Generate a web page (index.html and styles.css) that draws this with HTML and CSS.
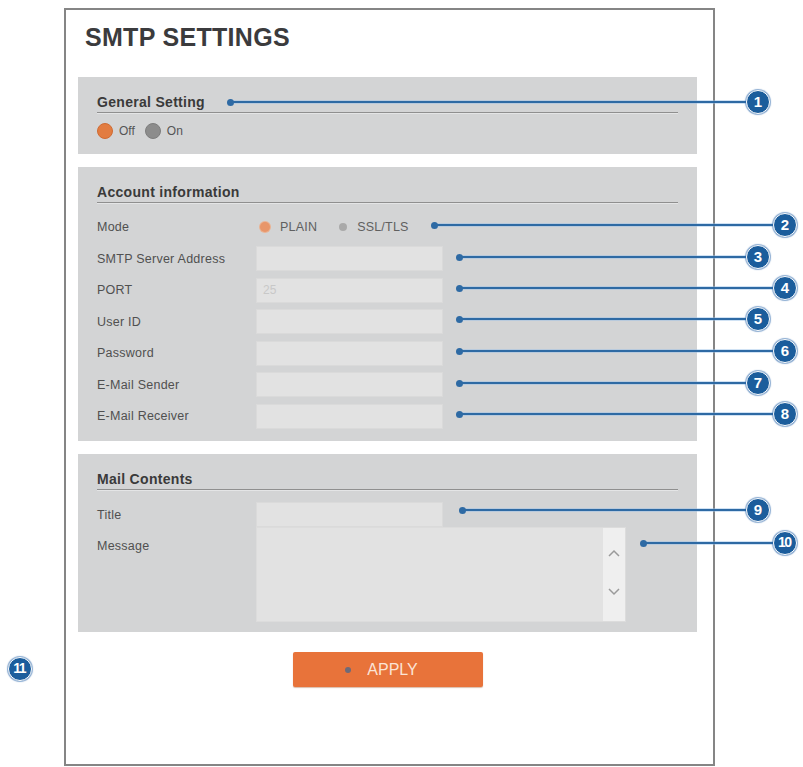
FILE: index.html
```html
<!DOCTYPE html>
<html lang="en">
<head>
<meta charset="utf-8">
<title>SMTP Settings</title>
<link rel="stylesheet" href="styles.css">
</head>
<body>
<div class="page">
  <section class="frame">
    <h1 class="title">SMTP SETTINGS</h1>

    <div class="panel">
      <h2 class="panel-head">General Setting</h2>
      <div class="toggle-row">
        <span class="toggle"><span class="knob knob-active"></span>Off</span>
        <span class="toggle"><span class="knob knob-idle"></span>On</span>
      </div>
    </div>

    <div class="panel panel-account">
      <h2 class="panel-head">Account information</h2>
      <div class="form-grid">
        <span class="label">Mode</span>
        <div class="mode">
          <span class="dot dot-active"></span><span class="mode-text">PLAIN</span>
          <span class="dot dot-idle"></span><span class="mode-text">SSL/TLS</span>
        </div>
        <span class="label">SMTP Server Address</span>
        <div class="field"></div>
        <span class="label">PORT</span>
        <div class="field"><span class="placeholder">25</span></div>
        <span class="label">User ID</span>
        <div class="field"></div>
        <span class="label">Password</span>
        <div class="field"></div>
        <span class="label">E-Mail Sender</span>
        <div class="field"></div>
        <span class="label">E-Mail Receiver</span>
        <div class="field"></div>
      </div>
    </div>

    <div class="panel panel-mail">
      <h2 class="panel-head">Mail Contents</h2>
      <div class="mail-grid">
        <span class="label">Title</span>
        <div class="field"></div>
        <span class="label label-top">Message</span>
        <div class="textarea">
          <div class="scrollbar">
            <svg width="12" height="8" viewBox="0 0 12 8"><polyline points="1,7 6,2 11,7" fill="none" stroke="#9a9a9a" stroke-width="1.5"/></svg>
            <svg width="12" height="8" viewBox="0 0 12 8"><polyline points="1,1 6,6 11,1" fill="none" stroke="#9a9a9a" stroke-width="1.5"/></svg>
          </div>
        </div>
      </div>
    </div>

    <div class="actions">
      <button class="apply" type="button"><span class="apply-dot"></span>APPLY</button>
    </div>
  </section>

  <div class="callout c1"><span class="badge">1</span></div>
  <div class="callout c2"><span class="badge">2</span></div>
  <div class="callout c3"><span class="badge">3</span></div>
  <div class="callout c4"><span class="badge">4</span></div>
  <div class="callout c5"><span class="badge">5</span></div>
  <div class="callout c6"><span class="badge">6</span></div>
  <div class="callout c7"><span class="badge">7</span></div>
  <div class="callout c8"><span class="badge">8</span></div>
  <div class="callout c9"><span class="badge">9</span></div>
  <div class="callout c10"><span class="badge badge-wide">10</span></div>
  <span class="badge badge-wide badge-free">11</span>
</div>
</body>
</html>
```

FILE: styles.css
```css
html, body {
  margin: 0;
  padding: 0;
  background: #ffffff;
}

body {
  font-family: "Liberation Sans", Arial, sans-serif;
  color: #4f4f4f;
}

.page {
  position: relative;
  width: 803px;
  height: 767px;
  overflow: hidden;
}

/* Settings window */
.frame {
  box-sizing: border-box;
  margin: 8px 0 0 64px;
  width: 651px;
  height: 758px;
  border: 2px solid #858585;
  padding: 12px 16px 0 12px;
}

.title {
  margin: 0 0 25px 7px;
  font-size: 25px;
  line-height: 30px;
  font-weight: bold;
  color: #3b3b3d;
  letter-spacing: 0.3px;
}

/* Grey setting groups */
.panel {
  background: #d3d4d5;
  padding: 17px 19px 15px 19px;
  margin-bottom: 13px;
}

.panel-head {
  margin: 0;
  font-size: 14px;
  line-height: 16px;
  font-weight: bold;
  color: #3a3a3a;
  padding-bottom: 2px;
  border-bottom: 1px solid #8f8f8f;
  box-shadow: 0 1px 0 #e4e5e6;
  letter-spacing: 0.3px;
}

.toggle-row {
  display: flex;
  gap: 10px;
  margin-top: 10px;
  height: 16px;
  align-items: center;
}

.toggle {
  display: flex;
  align-items: center;
  gap: 6px;
  font-size: 12px;
  color: #555;
}

.knob {
  width: 16px;
  height: 16px;
  border-radius: 50%;
  box-sizing: border-box;
}

.knob-active {
  background: #e27c41;
  border: 1px solid #d06b33;
}

.knob-idle {
  background: #8c8c8c;
  border: 1px solid #7d7d7d;
}

/* Label / input rows */
.panel-account {
  padding-bottom: 12.5px;
}

.form-grid,
.mail-grid {
  display: grid;
  grid-template-columns: 159px auto;
  grid-auto-rows: 25px;
  row-gap: 6.5px;
  align-items: center;
  justify-items: start;
}

.form-grid {
  margin-top: 11.5px;
}

.label {
  font-size: 12.5px;
  color: #505050;
  letter-spacing: 0.25px;
  white-space: nowrap;
}

.field {
  box-sizing: border-box;
  width: 187px;
  height: 25px;
  background: #e2e2e2;
  border: 1px solid #dadada;
  display: flex;
  align-items: center;
  padding-left: 6px;
}

.placeholder {
  font-size: 12px;
  color: #c8c8c8;
}

.mode {
  display: flex;
  align-items: center;
  padding-left: 4px;
}

.dot {
  border-radius: 50%;
}

.dot-active {
  width: 10px;
  height: 10px;
  background: #e8966a;
  box-shadow: 0 0 0 1px #eab393;
}

.dot-idle {
  width: 8px;
  height: 8px;
  background: #a9a9a9;
  margin-left: 22px;
}

.mode-text {
  font-size: 12.5px;
  color: #606060;
  margin-left: 10px;
  letter-spacing: 0.2px;
}

/* Mail contents */
.panel-mail {
  padding-bottom: 10px;
}

.mail-grid {
  margin-top: 12px;
  grid-template-rows: 25px 95px;
  row-gap: 0;
}

.label-top {
  align-self: start;
  padding-top: 12px;
}

.textarea {
  box-sizing: border-box;
  width: 370px;
  height: 95px;
  background: #e2e2e2;
  border: 1px solid #dcdcdc;
  display: flex;
  justify-content: flex-end;
}

.scrollbar {
  width: 22px;
  background: #efefef;
  display: flex;
  flex-direction: column;
  align-items: center;
  justify-content: space-between;
  padding: 21px 0 25px;
}

/* Apply button */
.actions {
  display: flex;
  justify-content: center;
  margin-top: 20px;
}

.apply {
  width: 190px;
  height: 35px;
  background: #e8733a;
  border: none;
  border-radius: 2px;
  box-shadow: 0 1px 1px rgba(150, 70, 20, 0.35);
  color: #fbe4d6;
  font-family: "Liberation Sans", Arial, sans-serif;
  font-size: 16px;
  display: flex;
  align-items: center;
  justify-content: center;
  gap: 16px;
  padding: 0 12px 0 0;
}

.apply-dot {
  width: 6px;
  height: 6px;
  border-radius: 50%;
  background: #6e6a78;
}

/* Numbered annotation leaders */
.callout {
  position: absolute;
  height: 2px;
  background: #2e6aa4;
  box-shadow: 0 0 0 1px rgba(150, 190, 230, 0.45);
}

.callout::before {
  content: "";
  position: absolute;
  left: -3px;
  top: -2.5px;
  width: 7px;
  height: 7px;
  border-radius: 50%;
  background: #2e6aa4;
}

.badge {
  position: absolute;
  right: -12px;
  top: -11px;
  box-sizing: border-box;
  width: 24px;
  height: 24px;
  border-radius: 50%;
  background: #1b5d9c;
  border: 1.5px solid #ffffff;
  box-shadow: 0 0 1px 1px rgba(40, 100, 170, 0.55);
  color: #ffffff;
  font-family: "Liberation Sans", Arial, sans-serif;
  font-weight: bold;
  font-size: 15px;
  line-height: 21px;
  text-align: center;
}

.badge-wide {
  letter-spacing: -1.5px;
  text-indent: -1.5px;
  font-size: 14px;
}

.badge-free {
  right: auto;
  left: 8px;
  top: 657px;
}

.c1 { left: 230px; top: 101px; width: 528px; }
.c2 { left: 434px; top: 224px; width: 351px; }
.c3 { left: 459px; top: 256px; width: 299px; }
.c4 { left: 459px; top: 287px; width: 326px; }
.c5 { left: 459px; top: 318px; width: 299px; }
.c6 { left: 459px; top: 350px; width: 326px; }
.c7 { left: 459px; top: 382px; width: 299px; }
.c8 { left: 459px; top: 413px; width: 326px; }
.c9 { left: 462px; top: 509px; width: 296px; }
.c10 { left: 643px; top: 542px; width: 142px; }
```
